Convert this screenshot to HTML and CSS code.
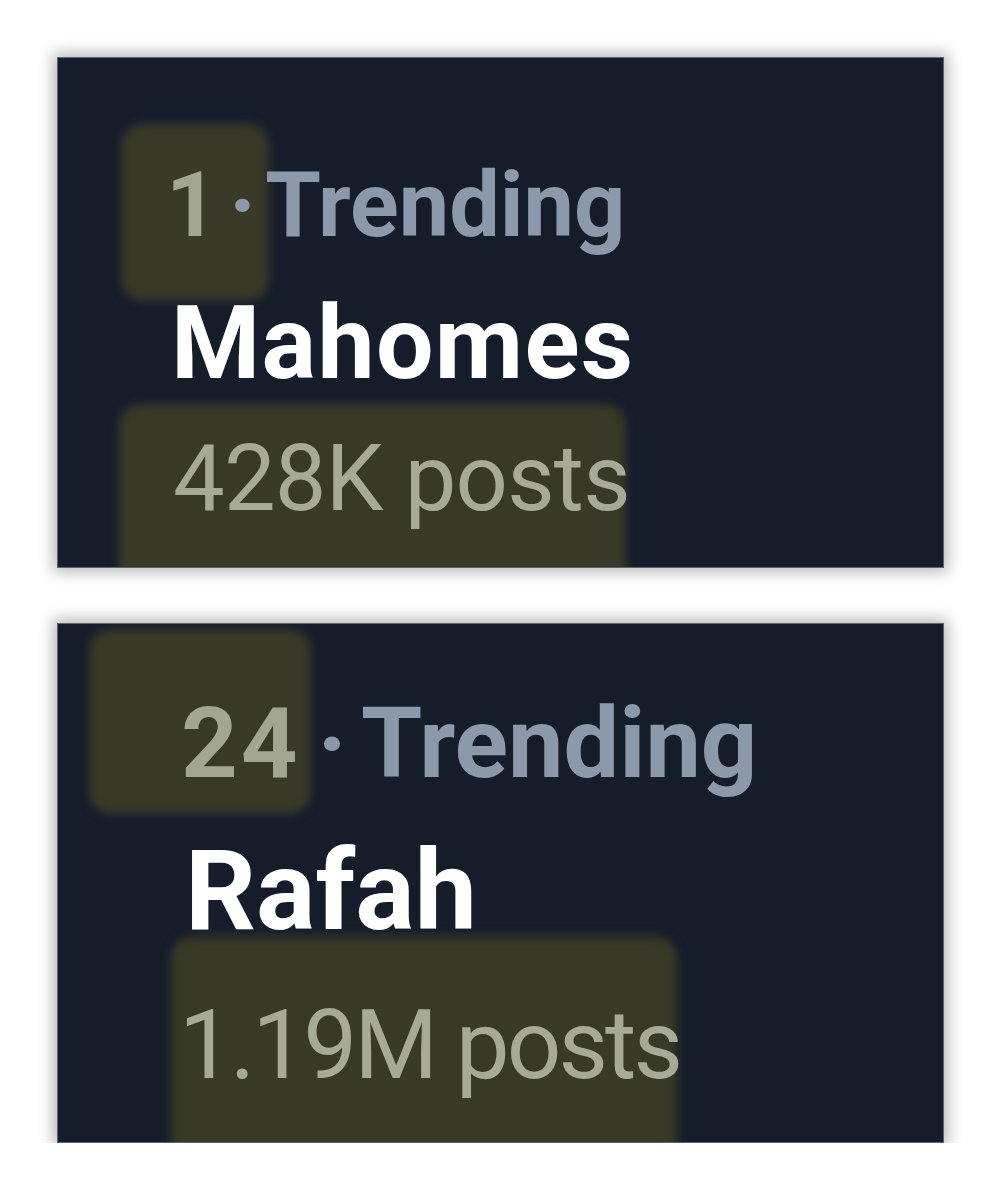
FILE: index.html
```html
<!DOCTYPE html>
<html lang="en">
<head>
    <meta charset="UTF-8">
    <title>Trending</title>
    <link rel="stylesheet" href="styles.css">
</head>
<body>

<div class="page">
    <section class="card card-first">
        <div class="mark mark-rank"></div>
        <div class="mark mark-count"></div>
        <div class="meta"><span class="rank">1</span> · Trending</div>
        <div class="topic">Mahomes</div>
        <div class="count">428K posts</div>
    </section>

    <section class="card card-second">
        <div class="mark mark-rank"></div>
        <div class="mark mark-count"></div>
        <div class="meta"><span class="rank">24</span> · Trending</div>
        <div class="topic">Rafah</div>
        <div class="count">1.19M posts</div>
    </section>
</div>

</body>
</html>
```

FILE: styles.css
```css
body {
    margin: 0;
    background-color: #fff;
    font-family: Roboto, 'Liberation Sans', sans-serif;
}
.page {
    display: flex;
    flex-direction: column;
    gap: 55px;
    padding: 57px 0 0 57px;
}
.card {
    position: relative;
    width: 887px;
    background-color: #151d2b;
    border: 1px solid #5d636d;
    box-shadow: 0 0 14px 4px rgba(0,0,0,0.28);
    overflow: hidden;
    box-sizing: border-box;
}
.meta, .topic, .count {
    position: relative;
    z-index: 1;
    line-height: 1;
    white-space: nowrap;
}
.meta {
    color: #8c99aa;
    font-weight: 700;
}
.rank {
    color: #a3a690;
}
.topic {
    color: #fff;
    font-weight: 700;
}
.count {
    color: #a7aa96;
    font-weight: 400;
}
.mark {
    position: absolute;
    background-color: #393927;
    border-radius: 22px;
    filter: blur(5px);
}

/* first card */
.card-first {
    height: 511px;
    padding: 103px 0 0 111px;
}
.card-first .meta { font-size: 90px; word-spacing: -11px; margin-left: -3px; }
.card-first .topic { font-size: 102px; margin: 41px 0 0 2px; letter-spacing: 1.3px; }
.card-first .count { font-size: 92px; margin: 39px 0 0 4px; letter-spacing: -0.8px; }
.card-first .mark-rank { left: 63px; top: 66px; width: 148px; height: 177px; }
.card-first .mark-count { left: 61px; top: 346px; width: 507px; height: 200px; }

/* second card */
.card-second {
    height: 520px;
    padding: 70px 0 0 123px;
}
.card-second .meta { font-size: 99px; word-spacing: -8px; }
.card-second .rank { letter-spacing: 3px; }
.card-second .topic { font-size: 111px; margin: 43px 0 0 4px; }
.card-second .count { font-size: 96px; margin: 50px 0 0 -2px; letter-spacing: -3px; }
.card-second .mark-rank { left: 31px; top: 5px; width: 222px; height: 185px; }
.card-second .mark-count { left: 113px; top: 312px; width: 506px; height: 230px; }
```
